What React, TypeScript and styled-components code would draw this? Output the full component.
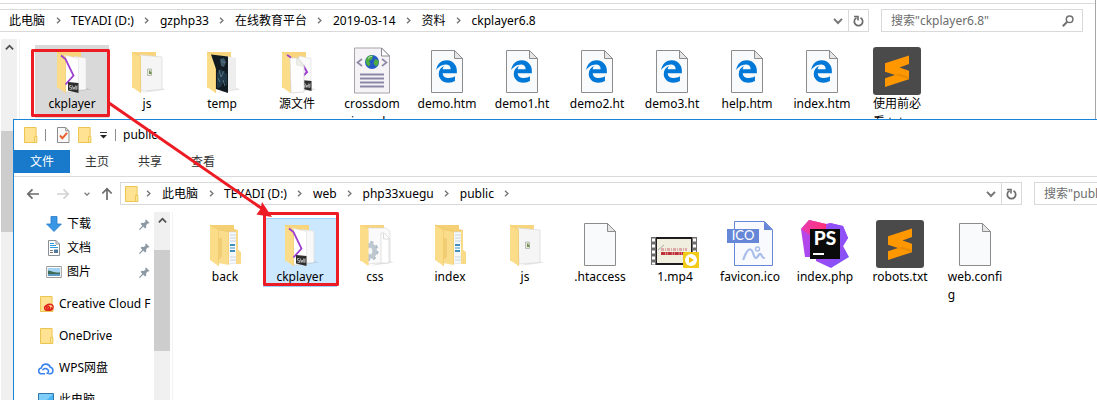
import React from 'react';
import styled, { createGlobalStyle, css } from 'styled-components';
import { FaEdgeLegacy } from 'react-icons/fa6';

const GlobalStyle = createGlobalStyle`
  * { box-sizing: border-box; }
  body {
    margin: 0;
    background: #fff;
    color: #000;
    font: 12px/18px "Noto Sans", "Noto Sans CJK SC", sans-serif;
    font-kerning: none;
  }
  button, input { font: inherit; font-kerning: none; color: inherit; }
  ul { list-style: none; margin: 0; padding: 0; }
`;

const Desktop = styled.main`
  position: relative;
  height: 100vh;
  overflow: hidden;
`;

const BackWindow = styled.section`
  display: flex;
  flex-direction: column;
  height: 100%;
  margin-right: 1px;
  padding-top: 3px;
  border-right: 1px solid #a6a6a6;
`;

const FrontWindow = styled.section`
  position: absolute;
  top: 119px;
  left: 13px;
  right: -152px;
  bottom: 0;
  display: flex;
  flex-direction: column;
  overflow: hidden;
  background: #fff;
  border: 1px solid #1883d7;
  border-bottom: 0;
`;

const Plain = styled.button`
  display: flex;
  align-items: center;
  justify-content: center;
  padding: 0;
  border: 0;
  background: none;
`;

const NavBar = styled.div<{ $inset?: boolean }>`
  display: flex;
  align-items: center;
  gap: 12px;
  flex: none;
  padding: 5px 12px 7px ${(p) => (p.$inset ? '12px' : '0')};
  border-top: 1px solid #dadbdc;
`;

const History = styled.div`
  display: flex;
  align-items: center;
  width: 82px;
  height: 23px;
`;

const HistoryButton = styled(Plain)<{ $gap: number }>`
  margin-right: ${(p) => p.$gap}px;
`;

const AddressBar = styled.div<{ $open?: boolean }>`
  display: flex;
  align-items: center;
  flex: 1;
  min-width: 0;
  height: 23px;
  border: 1px solid #d9d9d9;
  ${(p) => p.$open && css`border-left: 0; padding-left: 9px;`}
`;

const Crumbs = styled.nav`
  display: flex;
  align-items: center;
  flex: 1;
  min-width: 0;
  overflow: hidden;
`;

const Crumb = styled(Plain)`
  white-space: nowrap;
`;

const CrumbGap = styled.span`
  display: flex;
  justify-content: center;
  flex: none;
  width: 26px;
`;

const CrumbRoot = styled.span`
  display: flex;
  align-items: center;
  gap: 6px;
  flex: none;
  padding: 0 10px 0 4px;
`;

const FieldButton = styled(Plain)<{ $divided?: boolean }>`
  flex: none;
  width: 20px;
  height: 21px;
  border-left: ${(p) => (p.$divided ? '1px solid #d9d9d9' : '0')};
`;

const Search = styled.label`
  display: flex;
  align-items: center;
  flex: none;
  width: 202px;
  height: 23px;
  padding: 0 8px 0 9px;
  border: 1px solid #d9d9d9;
`;

const SearchInput = styled.input`
  flex: 1;
  min-width: 0;
  padding: 0;
  border: 0;
  outline: 0;
  background: none;
  &::placeholder { color: #6d6d6d; opacity: 1; }
`;

const Body = styled.div`
  display: flex;
  flex: 1;
  min-height: 0;
`;

const ScrollTrack = styled.div<{ $lead?: boolean }>`
  display: flex;
  flex-direction: column;
  align-items: center;
  flex: none;
  width: 16px;
  margin-left: ${(p) => (p.$lead ? '1px' : '0')};
  background: #f0f0f0;
`;

const ScrollUp = styled(Plain)`
  width: 16px;
  height: 17px;
`;

const Thumb = styled.div<{ $top: number }>`
  width: 100%;
  height: 101px;
  margin-top: ${(p) => p.$top}px;
  background: #cdcdcd;
`;

const FileList = styled.ul`
  display: flex;
  align-items: flex-start;
  gap: 1px;
  flex: 1;
  margin-left: 2px;
  padding: 6px 0 0 15px;
  border-left: 1px solid #f3f3f3;
`;

const FileTile = styled.button<{ $state?: 'dim' | 'active' }>`
  display: flex;
  flex-direction: column;
  align-items: center;
  width: 74px;
  padding: 1px 0 0;
  border: 1px solid transparent;
  background: none;
  ${(p) => p.$state === 'dim' && css`background: #d9d9d9; border-color: #d9d9d9; padding-bottom: 4px;`}
  ${(p) => p.$state === 'active' && css`background: #cce8ff; border-color: #99d1ff;`}
`;

const FileLabel = styled.span`
  text-align: left;
  line-height: 18px;
  white-space: pre;
`;

const TitleBar = styled.header`
  display: flex;
  align-items: center;
  flex: none;
  height: 30px;
  padding-left: 10px;
`;

const Rule = styled.span<{ $after: number }>`
  width: 1px;
  height: 12px;
  margin: 0 ${(p) => p.$after}px 0 7px;
  background: #8c8c8c;
`;

const QuickButton = styled(Plain)`
  margin-right: 8px;
`;

const Tabs = styled.div`
  display: flex;
  gap: 1px;
  flex: none;
  height: 26px;
`;

const Tab = styled(Plain)<{ $primary?: boolean }>`
  height: 23px;
  padding: 0 ${(p) => (p.$primary ? '16px' : '14px')};
  color: ${(p) => (p.$primary ? '#fff' : '#333')};
  background: ${(p) => (p.$primary ? '#1979ca' : 'none')};
`;

const Side = styled.nav`
  flex: none;
  width: 140px;
  overflow: hidden;
`;

const SideGroup = styled.div`
  padding-bottom: 4px;
`;

const SideLink = styled.a<{ $nested?: boolean }>`
  display: flex;
  align-items: center;
  gap: 5px;
  height: ${(p) => (p.$nested ? '24px' : '32px')};
  padding: 0 4px 0 ${(p) => (p.$nested ? '32px' : '24px')};
  color: #000;
  text-decoration: none;
  white-space: nowrap;
  svg { flex: none; }
  svg:first-child { width: 16px; }
`;

const SideText = styled.span`
  flex: 1;
`;

const Annotation = styled.svg`
  position: absolute;
  inset: 0;
  width: 100%;
  height: 100%;
  pointer-events: none;
`;

/* ---------- small glyphs ---------- */

const Chevron = ({ dir, color = '#777', size = 7 }: { dir: 'right' | 'down' | 'up'; color?: string; size?: number }) => {
  const turn = { right: 0, down: 90, up: -90 }[dir];
  return (
    <svg width={size} height={size} viewBox="0 0 8 8" aria-hidden="true">
      <path d="M2.3 0.8 5.6 4 2.3 7.2" fill="none" stroke={color} strokeWidth="1.6" transform={`rotate(${turn} 4 4)`} />
    </svg>
  );
};

const Arrow = ({ dir, color = '#6b6b6b' }: { dir: 'left' | 'right' | 'up'; color?: string }) => {
  const turn = { left: 0, up: 90, right: 180 }[dir];
  return (
    <svg width="14" height="14" viewBox="0 0 14 14" aria-hidden="true">
      <path d="M13 7H2M6.5 2.3 1.8 7l4.7 4.7" fill="none" stroke={color} strokeWidth="1.7" transform={`rotate(${turn} 7 7)`} />
    </svg>
  );
};

const Refresh = () => (
  <svg width="11" height="12" viewBox="0 0 11 12" aria-hidden="true">
    <path d="M7.5 2.8A4.2 4.2 0 1 1 3.5 2.8" fill="none" stroke="#6b6b6b" strokeWidth="1.7" />
    <path d="M1 1.5h4v4" fill="none" stroke="#6b6b6b" strokeWidth="1.6" />
  </svg>
);

const Magnifier = () => (
  <svg width="12" height="12" viewBox="0 0 12 12" aria-hidden="true">
    <circle cx="7.6" cy="4.3" r="3.3" fill="none" stroke="#707070" strokeWidth="1.5" />
    <path d="M5.2 6.8.8 11.2" stroke="#707070" strokeWidth="2" />
  </svg>
);

const MiniFolder = ({ cloud }: { cloud?: boolean }) => (
  <svg width="14" height="16" viewBox="0 0 14 16" preserveAspectRatio="xMaxYMid meet" aria-hidden="true">
    <path d="M.5.5h11.6v15H.5z" fill="#ffe392" stroke="#ecc550" />
    <path d="M10.6 9.4h2.3v6.1h-2.3z" fill="#ffe9a6" stroke="#ecc550" />
    {cloud && (
      <g fill="none" stroke="#e0251b" strokeWidth="1.4">
        <ellipse cx="9.6" cy="11.3" rx="3.5" ry="3" fill="#ffe392" />
        <ellipse cx="7" cy="12" rx="2.4" ry="2.3" />
        <path d="m6.5 11 3 2.4c1.5.8 2.8-1.5 1.2-2.4" />
      </g>
    )}
  </svg>
);

const CheckDoc = () => (
  <svg width="13" height="16" viewBox="0 0 13 16" aria-hidden="true">
    <path d="M.5.5h8.2l3.3 3.3v11.7H.5z" fill="#f8f8f8" stroke="#8d8d8d" />
    <path d="M8.7.5v3.3H12" fill="none" stroke="#8d8d8d" />
    <path d="m3 8.5 2.4 2.7 4.7-5.4" fill="none" stroke="#ea5f2d" strokeWidth="1.9" />
  </svg>
);

const MenuMark = () => (
  <svg width="8" height="8" viewBox="0 0 8 8" aria-hidden="true">
    <path d="M0 1.5h7" stroke="#333" />
    <path d="M0 4h7L3.5 7.5z" fill="#222" />
  </svg>
);

const Pin = () => (
  <svg width="11" height="11" viewBox="0 0 11 11" aria-hidden="true">
    <path d="M6.8.3 10.6 4l-1 .6-.9-.1-1.6 1.8.2 2.2-1.2 1L1.6 5l1-1.2 2.2.1 1.7-1.5-.2-1z" fill="#8d9aa5" />
    <path d="M4 7 .4 10.6" stroke="#8d9aa5" strokeWidth="1.2" />
  </svg>
);

const Download = () => (
  <svg width="16" height="16" viewBox="0 0 16 16" aria-hidden="true">
    <path d="M5 .5h6V8h4.4L8 15.5.6 8H5z" fill="#3a97e6" stroke="#2579c6" strokeWidth=".8" />
  </svg>
);

const Docs = () => (
  <svg width="16" height="16" viewBox="0 0 16 16" aria-hidden="true">
    <path d="M2.5.5H10L13.5 4v11.5h-11z" fill="#fff" stroke="#8a8f94" />
    <path d="M10 .5V4h3.5" fill="none" stroke="#8a8f94" />
    <path d="M4 3.5h4M4 5.5h6M4 7.5h8" stroke="#2e9be0" strokeWidth="1.1" />
    <path d="M4 10.5h3M4 12.5h3" stroke="#777" />
    <path d="M8 9.5h4V13H8z" fill="#50789a" />
  </svg>
);

const Pictures = () => (
  <svg width="16" height="16" viewBox="0 0 16 16" aria-hidden="true">
    <path d="M.7 2.5h14.6v11H.7z" fill="#fff" stroke="#9a9a9a" />
    <path d="M2 4h12v8H2z" fill="#a5d4f3" />
    <path d="M2 6.5c4 .3 6 2.5 12 2v1.5H2z" fill="#3e6b58" />
    <path d="M2 10h12v2H2z" fill="#5b98c4" />
  </svg>
);

const WpsCloud = () => (
  <svg width="16" height="13" viewBox="0 0 16 13" aria-hidden="true">
    <g fill="none" stroke="#3b83ee" strokeWidth="1.6">
      <path d="M7 11.8H3.7A2.9 2.9 0 0 1 3.4 6 4.6 4.6 0 0 1 12.3 5.3 3.3 3.3 0 0 1 12 11.8H10.3" />
      <path d="M4.5 8.2C6.5 5.5 9.8 6.5 10.5 8.8c.3 1.2-.6 2.6-2 2.6" />
    </g>
  </svg>
);

const Computer = () => (
  <svg width="16" height="16" viewBox="0 0 16 16" aria-hidden="true">
    <path d="M.5 1.5h15V12H.5z" fill="#4db4f3" stroke="#3377a8" />
    <path d="M1 2h14L5 11.5H1z" fill="#7fcdf9" />
    <path d="M5 14h6" stroke="#667" strokeWidth="1.5" />
  </svg>
);

/* ---------- 48px file icons ---------- */

const Icon48 = ({ children }: { children: React.ReactNode }) => (
  <svg width="48" height="48" viewBox="0 0 48 48" aria-hidden="true">{children}</svg>
);

const Flap = () => (
  <>
    <path d="M9 5 17.5 9.5V46L9 40z" fill="#fbdc88" />
    <path d="M9 5 17.5 9.5V46" fill="none" stroke="#efc868" strokeWidth=".7" />
  </>
);

const FolderShell = ({ children }: { children?: React.ReactNode }) => (
  <Icon48>
    <path d="M36 40 43 42.5 19 46z" fill="#000" opacity=".1" />
    <path d="M9 5h24v36H9z" fill="#f8d57c" />
    {children}
  </Icon48>
);

const SwfBadge = ({ x, y }: { x: number; y: number }) => (
  <g>
    <path d={`M${x} ${y}l10.5 1v10l-10.5-2.5z`} fill="#2d2d2d" />
    <path d={`M${x + 3.5} ${y + 3.5}H${x + 1.5}v1.8h2v2h-2M${x + 4.5} ${y + 3.5}l.6 4 1-2.5 1 2.5.4-4M${x + 9.8} ${y + 4}H${x + 8.7}v4M${x + 8.7} ${y + 6}h1`} stroke="#ddd" strokeWidth=".7" fill="none" />
  </g>
);

const PlayerFolder = () => (
  <FolderShell>
    <path d="M26 9.5 38 11v31.5l-12 1z" fill="#f8f8f8" stroke="#dcdcdc" strokeWidth=".6" />
    <path d="m16 8 14.5 3.5V44L16 45z" fill="#fff" stroke="#dedede" strokeWidth=".6" />
    <Flap />
    <path d="m13 8.5 4.5 3.5 8 16.5-8 9" fill="none" stroke="#9c3fd0" strokeWidth="1.8" />
    <SwfBadge x={20} y={35} />
  </FolderShell>
);

const ScriptFolder = () => (
  <FolderShell>
    <path d="m16.5 8 22.5 2v32.5L18 44z" fill="#f5f5f6" stroke="#dadada" strokeWidth=".7" />
    <path d="M24.5 22h4v6.5h-4z" fill="#e7eadc" stroke="#a6aaa0" strokeWidth=".7" />
    <path d="M26 23.5h1.5v1.5h1v2H26z" fill="#719052" />
    <Flap />
  </FolderShell>
);

const PhotoFolder = () => (
  <FolderShell>
    <path d="M27 9 38 11v31l-11 2z" fill="#eee" />
    <Flap />
    <path d="m13 7.5 17 2V46l-12-4V22z" fill="#111a21" />
    <path d="m22 12 4-1 2 4-2 5-3-1z" fill="#3d5666" />
    <path d="m19 26 4-4 3 3 3 2v12l-3-5-3 6-4 1z" fill="#1f3746" />
    <path d="m21 23 2 7 3-6M25 33l2 6M20 31l2 4M23 14l4 2" stroke="#5e8194" strokeWidth=".8" fill="none" />
  </FolderShell>
);

const SourceFolder = () => (
  <FolderShell>
    <path d="M26 9 38 11.5V40l-12 1z" fill="#fafafa" stroke="#dcdcdc" strokeWidth=".6" />
    <Flap />
    <path d="M30 18l4 7-5 5" fill="none" stroke="#9c3fd0" strokeWidth="2" />
    <SwfBadge x={28} y={33} />
    <path d="M17 11h8l6 7.5V45l-13 1z" fill="#fdfdfd" stroke="#d4d4d4" strokeWidth=".7" />
    <path d="m23.5 10.5.3 7.5 7.2 1.5z" fill="#f0f0ea" stroke="#d0d0c8" strokeWidth=".5" />
    <path d="m14 8 4 2.5" fill="none" stroke="#9c3fd0" strokeWidth="1.8" />
  </FolderShell>
);

const StyleFolder = () => (
  <FolderShell>
    <path d="M17 8h18l4 3v31l-22 2z" fill="#fafafa" stroke="#d8d8d8" strokeWidth=".7" />
    <path d="M30 13v30h8V18l-5-5z" fill="#fff" stroke="#d4d4d4" strokeWidth=".7" />
    <path d="M32.5 13v6H38" fill="none" stroke="#ccc" strokeWidth=".7" />
    <g fill="none">
      <ellipse cx="19" cy="31" rx="5" ry="6" stroke="#bcc7cf" strokeWidth="4" />
      <ellipse cx="19" cy="31" rx="7.5" ry="9" stroke="#b0bcc5" strokeWidth="2" strokeDasharray="3.3 3.2" />
    </g>
    <ellipse cx="19" cy="31" rx="3" ry="3.8" fill="#f4f6f7" stroke="#9eabb4" strokeWidth=".6" />
    <path d="M9 5 17.5 9.5V46L9 40z" fill="#fbdc88" />
  </FolderShell>
);

const NestedFolder = () => (
  <Icon48>
    <path d="M9 5h24v4l4 1v30H9z" fill="#f4cf74" />
    <path d="M27 12h9v31l-9 1z" fill="#f5f8fb" stroke="#d3d9de" strokeWidth=".6" />
    <path d="M29 15h6M29 18h6M29 21h6M29 37h6M29 40h6" stroke="#c3d0da" strokeWidth=".9" />
    <path d="M29 24h5v2h-5zM29 30h5v2h-5z" fill="#3f8fc0" />
    <path d="M29 27h5v2h-5z" fill="#9cc8e4" />
    <path d="M35 10h2v20l3 2v12h-5z" fill="#f9da87" />
    <path d="m16 8.5 3 1.5v30l9 4.5V11z" fill="#f1ca6c" />
    <path d="m17 10 10.500 2V45L17 43z" fill="#fadd8c" />
    <path d="M17 18h4v19l-4 3z" fill="#f1cd75" />
    <Flap />
  </Icon48>
);

const Sheet = () => (
  <>
    <path d="M8.5 3.5h23l8 8v34h-31z" fill="#f9fafb" stroke="#8c8c8c" />
    <path d="M31.5 3.5v8h8z" fill="#e6e6e6" stroke="#8c8c8c" />
  </>
);

const BlankFile = () => <Icon48><Sheet /></Icon48>;

const EdgeFile = () => (
  <Icon48>
    <Sheet />
    <FaEdgeLegacy x={12} y={13} size={23} color="#0078d7" />
  </Icon48>
);

const XmlFile = () => (
  <Icon48>
    <path d="M6.5 1h27l8 8v37h-35z" fill="#f6f3f7" stroke="#a9a3ab" />
    <path d="M33.5 1v8h8z" fill="#fff" stroke="#8f8a92" />
    <circle cx="24" cy="15" r="7" fill="#2458c4" />
    <path d="M19 10.5c2-2.5 5-3 6-1.5l-1 3.5-3 1.5 1.5 3-1.5 2.5c-3-1.5-4.5-6-2-9zM27 12l3.5 1.5c.5 3-.8 5-2.5 6l-2.5-3z" fill="#4fae3f" />
    <path d="M20 11.5c2-2 3-2 4-2" stroke="#c9f0d0" fill="none" />
    <path d="m14 12-4.5 3.5L14 19M34 12l4.500 3.500L34 19" fill="none" stroke="#8f8aa6" strokeWidth="1.7" />
    <path d="M12 27.5h24M12 31.5h24M12 35.5h24M12 39.5h24" stroke="#8a88a8" strokeWidth="1.8" />
  </Icon48>
);

const SublimeFile = () => (
  <Icon48>
    <rect width="48" height="48" rx="3" fill="#4a4a4a" />
    <path d="M36 8.5 12 16.2v8.6L22 28l-10 3.2V40l24-7.8v-8.500l-9.500-3.200L36 17z" fill="#ff9800" />
    <path d="m21.5 28 5-1.6L36 30v2.2z" fill="#ec8c00" />
  </Icon48>
);

const VideoFile = () => (
  <Icon48>
    <path d="M0 17h46v28H0z" fill="#6d6d6d" />
    <path d="M5 17h36v28H5z" fill="#1f1a1e" />
    <path d="M6 19h34v24H6z" fill="#f0efdf" />
    <path d="M2.5 18.5v26M43.5 18.5v26" stroke="#fff" strokeWidth="3" strokeDasharray="3 3" />
    <path d="m7 30 6-5" stroke="#aaa" />
    <path d="M10 29.5h26" stroke="#dcaaa8" strokeWidth="3" strokeDasharray="3 1 1 1" />
    <path d="M10 33.5h25" stroke="#c0303a" strokeWidth="3" strokeDasharray="4 .5 2 .4" />
    <rect x="32" y="32" width="16" height="16" rx="1" fill="#f3cb16" />
    <circle cx="40" cy="40" r="6" fill="#fff" />
    <path d="m38 37 5 3-5 3z" fill="#f0c000" />
  </Icon48>
);

const IcoFile = () => (
  <Icon48>
    <path d="M8.5 1.5h30l8 8v36h-38z" fill="#f8fafe" stroke="#6687d8" />
    <path d="M38 1.5v8.5h8.5z" fill="#6687d8" />
    <path d="M1 9h32v14H1z" fill="#6687d8" />
    <text x="17" y="20" textAnchor="middle" fontFamily="Lato, sans-serif" fontSize="13" fill="#fff">ICO</text>
    <path d="M17.5 39c3-8 5-10 7-9.5 3 .5 3 9 5.5 8.5 2-.5 2.5-4.5 4.5-4 1.5.5 1 4 3.5 4" fill="none" stroke="#a9bdea" strokeWidth="2.2" strokeLinecap="round" />
    <circle cx="31.5" cy="29" r="2" fill="none" stroke="#a9bdea" strokeWidth="1.5" />
  </Icon48>
);

const PhpStormFile = () => (
  <Icon48>
    <defs>
      <linearGradient id="storm" x1="0" y1="0" x2="1" y2="1">
        <stop offset="0" stopColor="#c343e0" />
        <stop offset=".6" stopColor="#a04af5" />
        <stop offset="1" stopColor="#7457f6" />
      </linearGradient>
      <linearGradient id="stormPink">
        <stop offset="0" stopColor="#e83bb0" />
        <stop offset="1" stopColor="#ff3177" />
      </linearGradient>
    </defs>
    <path d="M0 9 8 0l17 4 4-1 13 3 5 12-5 8 6 11-18 11-15-7V37H4z" fill="url(#storm)" />
    <path d="m0 9 8-9 17 4v6H9v5z" fill="url(#stormPink)" />
    <path d="m29 3 13 3 5 12-5 8-3-2V9H25z" fill="#8f50f7" />
    <path d="M9 9h30v30H9z" fill="#0b0b0b" />
    <path d="M12 33h11v2H12z" fill="#fff" />
    <text x="24" y="25" textAnchor="middle" fontFamily="Lato, sans-serif" fontWeight="900" fontSize="19" fill="#fff">PS</text>
  </Icon48>
);

/* ---------- composed parts ---------- */

type FileEntry = { lines: string[]; Icon: () => React.ReactElement; state?: 'dim' | 'active' };

const sourceFiles: FileEntry[] = [
  { lines: ['ckplayer'], Icon: PlayerFolder, state: 'dim' },
  { lines: ['js'], Icon: ScriptFolder },
  { lines: ['temp'], Icon: PhotoFolder },
  { lines: ['源文件'], Icon: SourceFolder },
  { lines: ['crossdom', 'ain.xml'], Icon: XmlFile },
  { lines: ['demo.htm'], Icon: EdgeFile },
  { lines: ['demo1.ht'], Icon: EdgeFile },
  { lines: ['demo2.ht'], Icon: EdgeFile },
  { lines: ['demo3.ht'], Icon: EdgeFile },
  { lines: ['help.htm'], Icon: EdgeFile },
  { lines: ['index.htm'], Icon: EdgeFile },
  { lines: ['使用前必', '看.txt'], Icon: SublimeFile },
];

const publicFiles: FileEntry[] = [
  { lines: ['back'], Icon: NestedFolder },
  { lines: ['ckplayer'], Icon: PlayerFolder, state: 'active' },
  { lines: ['css'], Icon: StyleFolder },
  { lines: ['index'], Icon: NestedFolder },
  { lines: ['js'], Icon: ScriptFolder },
  { lines: ['.htaccess'], Icon: BlankFile },
  { lines: ['1.mp4'], Icon: VideoFile },
  { lines: ['favicon.ico'], Icon: IcoFile },
  { lines: ['index.php'], Icon: PhpStormFile },
  { lines: ['robots.txt'], Icon: SublimeFile },
  { lines: ['web.confi', 'g'], Icon: BlankFile },
];

const Files = ({ files }: { files: FileEntry[] }) => (
  <FileList>
    {files.map(({ lines, Icon, state }) => (
      <li key={lines.join('')}>
        <FileTile type="button" $state={state}>
          <Icon />
          <FileLabel>{lines.join('\n')}</FileLabel>
        </FileTile>
      </li>
    ))}
  </FileList>
);

const Address = ({ path, open }: { path: string[]; open?: boolean }) => (
  <AddressBar $open={open}>
    <Crumbs aria-label="路径">
      {!open && (
        <CrumbRoot>
          <MiniFolder />
          <Chevron dir="right" />
        </CrumbRoot>
      )}
      {path.map((name, i) => (
        <React.Fragment key={name}>
          <Crumb type="button">{name}</Crumb>
          {(!open || i < path.length - 1) && <CrumbGap><Chevron dir="right" /></CrumbGap>}
        </React.Fragment>
      ))}
    </Crumbs>
    <FieldButton type="button" aria-label="历史记录"><Chevron dir="down" size={10} /></FieldButton>
    <FieldButton type="button" $divided aria-label="刷新"><Refresh /></FieldButton>
  </AddressBar>
);

const SearchBox = ({ folder }: { folder: string }) => (
  <Search>
    <SearchInput type="text" aria-label="搜索" placeholder={`搜索"${folder}"`} />
    <Magnifier />
  </Search>
);

export default function App() {
  return (
    <>
      <GlobalStyle />
      <Desktop>
        <BackWindow>
          <NavBar>
            <Address open path={['此电脑', 'TEYADI (D:)', 'gzphp33', '在线教育平台', '2019-03-14', '资料', 'ckplayer6.8']} />
            <SearchBox folder="ckplayer6.8" />
          </NavBar>
          <Body>
            <ScrollTrack $lead>
              <ScrollUp type="button" aria-label="向上滚动"><Chevron dir="up" size={9} color="#505050" /></ScrollUp>
              <Thumb $top={75} />
            </ScrollTrack>
            <Files files={sourceFiles} />
          </Body>
        </BackWindow>

        <FrontWindow>
          <TitleBar>
            <MiniFolder />
            <Rule $after={11} />
            <QuickButton type="button" aria-label="属性"><CheckDoc /></QuickButton>
            <QuickButton type="button" aria-label="新建文件夹"><MiniFolder /></QuickButton>
            <Plain type="button" aria-label="自定义"><MenuMark /></Plain>
            <Rule $after={7} />
            <span>public</span>
          </TitleBar>
          <Tabs>
            <Tab type="button" $primary>文件</Tab>
            <Tab type="button">主页</Tab>
            <Tab type="button">共享</Tab>
            <Tab type="button">查看</Tab>
          </Tabs>
          <NavBar $inset>
            <History>
              <HistoryButton type="button" $gap={16} aria-label="后退"><Arrow dir="left" /></HistoryButton>
              <HistoryButton type="button" $gap={14} aria-label="前进"><Arrow dir="right" color="#d2d2d2" /></HistoryButton>
              <HistoryButton type="button" $gap={10} aria-label="最近位置"><Chevron dir="down" size={6} /></HistoryButton>
              <HistoryButton type="button" $gap={0} aria-label="上移"><Arrow dir="up" /></HistoryButton>
            </History>
            <Address path={['此电脑', 'TEYADI (D:)', 'web', 'php33xuegu', 'public']} />
            <SearchBox folder="public" />
          </NavBar>
          <Body>
            <Side aria-label="导航">
              <SideGroup>
                <SideLink href="#downloads" $nested><Download /><SideText>下载</SideText><Pin /></SideLink>
                <SideLink href="#documents" $nested><Docs /><SideText>文档</SideText><Pin /></SideLink>
                <SideLink href="#pictures" $nested><Pictures /><SideText>图片</SideText><Pin /></SideLink>
              </SideGroup>
              <SideLink href="#creative"><MiniFolder cloud /><SideText>Creative Cloud F</SideText></SideLink>
              <SideLink href="#onedrive"><MiniFolder /><SideText>OneDrive</SideText></SideLink>
              <SideLink href="#wps"><WpsCloud /><SideText>WPS网盘</SideText></SideLink>
              <SideLink href="#computer"><Computer /><SideText>此电脑</SideText></SideLink>
            </Side>
            <ScrollTrack>
              <ScrollUp type="button" aria-label="向上滚动"><Chevron dir="up" size={9} color="#505050" /></ScrollUp>
              <Thumb $top={21} />
            </ScrollTrack>
            <Files files={publicFiles} />
          </Body>
        </FrontWindow>

        <Annotation aria-hidden="true">
          <g fill="none" stroke="#ed1c24" strokeWidth="3" strokeLinejoin="round">
            <path d="M32.5 50.5h76v65h-76zM264.5 213.5h73v71h-73z" />
            <path d="M109 103 264 210" />
          </g>
          <path d="m272 217-15.5-2.500 4-5.500 1.500-7z" fill="#ed1c24" />
        </Annotation>
      </Desktop>
    </>
  );
}
